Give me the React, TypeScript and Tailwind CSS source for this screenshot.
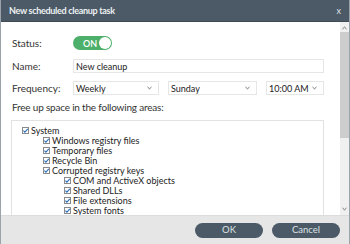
import React from "react";

const Check = ({ className = "" }: { className?: string }) => (
  <span className={"relative inline-flex w-[7px] h-[7px] border border-[#8a8a8a] bg-white shrink-0 " + className}>
    <svg viewBox="0 0 7 7" className="absolute left-0 top-0 w-[7px] h-[7px] -translate-x-[1px] -translate-y-[1px]">
      <path d="M1.4 3.6 L2.9 5.1 L5.8 1.9" fill="none" stroke="#2b6fb8" strokeWidth="1.1" />
    </svg>
  </span>
);

const Item = ({ level, label }: { level: number; label: string }) => {
  const pl = level === 0 ? "pl-[10px]" : level === 1 ? "pl-[31px]" : "pl-[52px]";
  return (
    <div className={"flex items-center h-[10px] gap-[2px] " + pl}>
      <Check />
      <span className="text-[9px] leading-[9px] text-[#222]">{label}</span>
    </div>
  );
};

const Chevron = () => (
  <svg viewBox="0 0 6 4" className="w-[5px] h-[4px] shrink-0">
    <path d="M0.6 0.8 L3 3 L5.4 0.8" fill="none" stroke="#555" strokeWidth="1" />
  </svg>
);

const Select = ({ label, w }: { label: string; w: string }) => (
  <div className={"h-[14px] border border-[#e6e6e6] flex items-center justify-between pl-[2px] pr-[6px] " + w}>
    <span className="text-[9px] leading-none text-[#222]">{label}</span>
    <Chevron />
  </div>
);

export default function App() {
  return (
    <div
      className="w-[350px] h-[244px] flex flex-col bg-white overflow-hidden border-l border-r border-[#9aa3a9]"
      style={{ fontFamily: 'Lato, "Open Sans", sans-serif' }}
    >
      <div className="h-[22px] bg-[#4b5a66] flex items-center justify-between pl-[8px] pr-[8px] shrink-0 border-b border-[#3f4c56]">
        <span className="text-[9px] font-bold tracking-[-0.3px] text-[#eef1f3] leading-none">New scheduled cleanup task</span>
        <span className="text-[9px] text-[#dfe4e7] leading-none">x</span>
      </div>
      <div className="flex-1 flex min-h-0">
        <div className="flex-1 flex flex-col pl-[11px] pr-[16px]">
          <div className="flex items-center mt-[14px] h-[14px]">
            <span className="w-[61px] text-[10px] text-[#333] leading-none">Status:</span>
            <div className="w-[39px] h-[14px] rounded-full bg-[#4cb06a] flex items-center justify-between pl-[10px] pr-[1px]">
              <span className="text-[9px] font-semibold text-white leading-none">ON</span>
              <span className="w-[12px] h-[12px] rounded-full bg-white" />
            </div>
          </div>
          <div className="flex items-center mt-[9px] h-[14px]">
            <span className="w-[61px] text-[10px] text-[#333] leading-none">Name:</span>
            <div className="flex-1 h-[14px] border border-[#e6e6e6] flex items-center pl-[2px]">
              <span className="text-[9px] leading-none text-[#222]">New cleanup</span>
            </div>
          </div>
          <div className="flex items-center mt-[8px] h-[14px]">
            <span className="w-[61px] text-[10px] text-[#333] leading-none">Frequency:</span>
            <Select label="Weekly" w="w-[86px]" />
            <div className="w-[9px]" />
            <Select label="Sunday" w="w-[89px]" />
            <div className="w-[9px]" />
            <Select label="10:00 AM" w="w-[58px]" />
          </div>
          <div className="mt-[6px] text-[10px] tracking-[-0.2px] text-[#333] leading-[12px]">Free up space in the following areas:</div>
          <div className="mt-[7px] -ml-[1px] flex-1 border-t border-l border-r border-[#e2e2e2] pt-[4px]">
            <Item level={0} label="System" />
            <Item level={1} label="Windows registry files" />
            <Item level={1} label="Temporary files" />
            <Item level={1} label="Recycle Bin" />
            <Item level={1} label="Corrupted registry keys" />
            <Item level={2} label="COM and ActiveX objects" />
            <Item level={2} label="Shared DLLs" />
            <Item level={2} label="File extensions" />
            <Item level={2} label="System fonts" />
          </div>
        </div>
        <div className="w-[9px] flex flex-col bg-[#f0f0f0] pt-[2px]">
          <div className="h-[7px] flex items-center justify-center">
            <svg viewBox="0 0 6 4" className="w-[5px] h-[4px]">
              <path d="M0.6 3.2 L3 1 L5.4 3.2" fill="none" stroke="#555" strokeWidth="1" />
            </svg>
          </div>
          <div className="h-[106px] bg-[#cdcdcd] mt-[1px]" />
          <div className="flex-1" />
          <div className="h-[7px] flex items-center justify-center mb-[3px]">
            <Chevron />
          </div>
        </div>
      </div>
      <div className="h-[29px] bg-[#e6e6e6] border-t border-[#dcdcdc] flex items-center justify-end gap-[9px] pr-[9px] shrink-0">
        <div className="w-[68px] h-[15px] rounded-full bg-[#4b5a66] flex items-center justify-center">
          <span className="text-[9.5px] text-[#dde2e5] leading-none">OK</span>
        </div>
        <div className="w-[68px] h-[15px] rounded-full bg-[#4b5a66] flex items-center justify-center">
          <span className="text-[9.5px] text-[#dde2e5] leading-none">Cancel</span>
        </div>
      </div>
    </div>
  );
}
